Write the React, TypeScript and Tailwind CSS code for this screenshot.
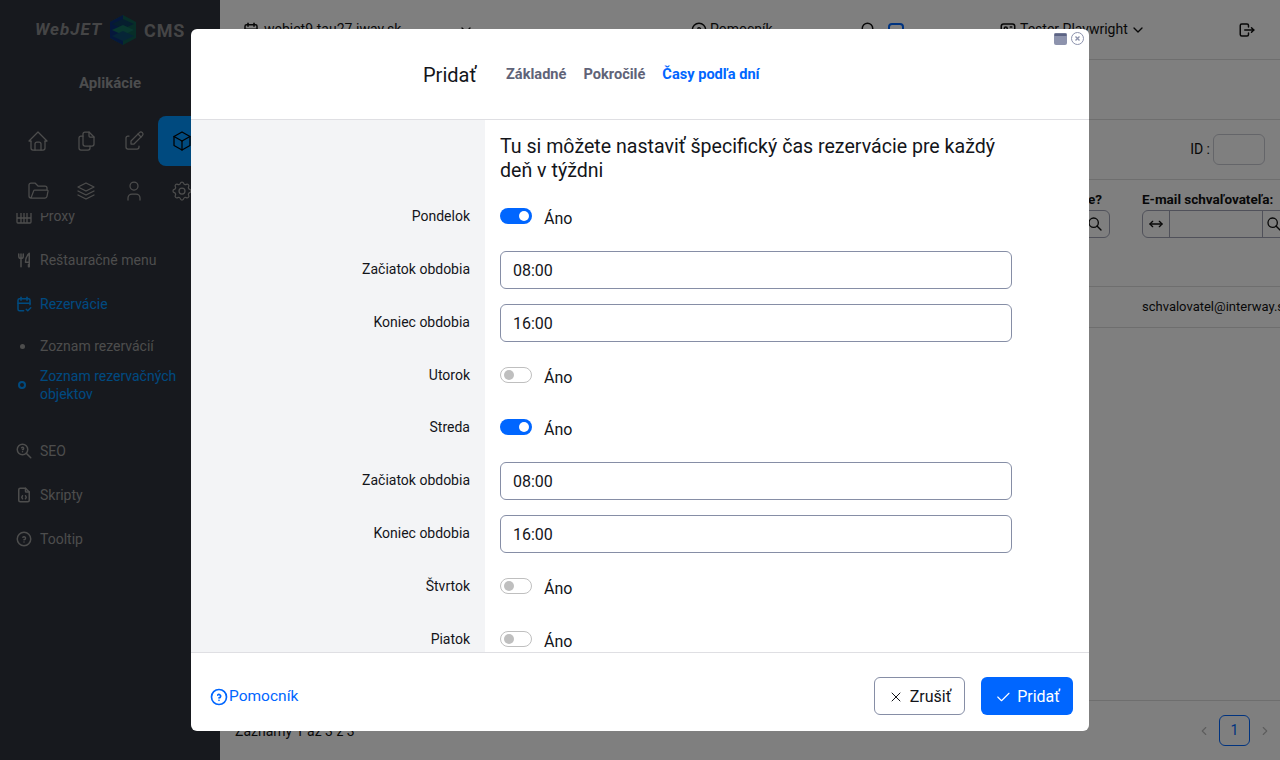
import React from 'react';
import {
  TbArrowsHorizontal, TbBox, TbCalendarCheck, TbCheck, TbChevronDown, TbChevronLeft, TbChevronRight,
  TbEdit, TbFileCode, TbFiles, TbFolderOpen, TbHelpCircle, TbHome, TbId, TbLogout, TbSearch,
  TbSettings, TbStack2, TbToolsKitchen2, TbUser, TbX, TbZoomQuestion, TbCalendar,
} from 'react-icons/tb';

const font = "font-['Roboto',sans-serif]";

const Logo = () => (
  <div className="h-[60px] flex items-center justify-center gap-[8px] text-[#8a8a8d]">
    <span className="italic font-bold text-[17px] tracking-[1px]">WebJET</span>
    <svg width="26" height="30" viewBox="0 0 26 30">
      <polygon points="13,0 26,7 26,23 13,30 0,23 0,7" fill="#0f5c50" />
      <polygon points="13,0 0,7 0,23 13,30" fill="#0b2f78" />
      <polygon points="2,9 13,4 24,9 13,14" fill="#0c3c5e" />
      <polygon points="2,15 13,10 24,15 13,20" fill="#12705f" />
      <polygon points="2,21 13,16 24,21 13,26" fill="#0c4a6e" />
    </svg>
    <span className="font-bold text-[18px] tracking-[0.8px]">CMS</span>
  </div>
);

const ProxyIcon = () => (
  <svg width="18" height="18" viewBox="0 0 18 18" fill="none" stroke="currentColor" strokeWidth="1.3">
    <rect x="2" y="2" width="14" height="14" rx="1" />
    <path d="M6 2v14M9 2v14M12 2v14M2 11h14" />
  </svg>
);

const appIcons = [TbHome, TbFiles, TbEdit, TbBox, TbFolderOpen, TbStack2, TbUser, TbSettings];

const Sidebar = () => (
  <aside className="w-[220px] shrink-0 h-full bg-[#2e323c] flex flex-col text-[#9a9a9a] overflow-hidden">
    <Logo />
    <div className="h-[56px] pt-[13px] text-center font-bold text-[15px] leading-5 text-[#999a9c]">Aplikácie</div>
    <div className="pl-[14px] grid grid-cols-[repeat(4,48px)] auto-rows-[50px] w-[220px]">
      {appIcons.map((Icon, i) => (
        <div
          key={i}
          className={`flex items-center justify-center ${i === 3 ? 'bg-[#0095ff] rounded-lg text-black w-[48px]' : ''}`}
        >
          <Icon size={24} strokeWidth={1.25} />
        </div>
      ))}
    </div>
    <div className="flex-1 -mt-[3px] overflow-hidden text-[14px]">
      <div className="-mt-[19px]">
        <div className="h-[44px] flex items-center pl-[15px] gap-[7px]"><ProxyIcon /><span>Proxy</span></div>
        <div className="h-[44px] flex items-center pl-[15px] gap-[7px]"><TbToolsKitchen2 size={18} /><span>Reštauračné menu</span></div>
        <div className="h-[44px] flex items-center pl-[15px] gap-[7px] text-[#0095ff]"><TbCalendarCheck size={18} /><span>Rezervácie</span></div>
        <div className="h-[40px] flex items-center pl-[20px] gap-[15px]">
          <span className="w-[5px] h-[5px] rounded-full bg-[#9a9a9a]" /><span>Zoznam rezervácií</span>
        </div>
        <div className="h-[48px] -mt-[5px] flex items-center pl-[18px] gap-[14px] text-[#0095ff] leading-[18px]">
          <span className="w-[8px] h-[8px] rounded-full border-2 border-[#0095ff] shrink-0" />
          <span>Zoznam rezervačných<br />objektov</span>
        </div>
        <div className="h-[44px] mt-[20px] flex items-center pl-[15px] gap-[7px]"><TbZoomQuestion size={18} /><span>SEO</span></div>
        <div className="h-[44px] flex items-center pl-[15px] gap-[7px]"><TbFileCode size={18} /><span>Skripty</span></div>
        <div className="h-[44px] flex items-center pl-[15px] gap-[7px]"><TbHelpCircle size={18} /><span>Tooltip</span></div>
      </div>
    </div>
  </aside>
);

const Main = () => (
  <main className="flex-1 min-w-0 h-full bg-white flex flex-col text-[#111] text-[14px] overflow-hidden">
    <header className="h-[60px] shrink-0 border-b border-[#ddd] flex items-center pl-[22px]">
      <TbCalendar size={18} />
      <span className="ml-[4px] w-[194px] whitespace-nowrap">webjet9.tau27.iway.sk</span>
      <TbChevronDown size={16} />
      <TbHelpCircle size={18} className="ml-[216px]" />
      <span className="ml-[2px] w-[150px]">Pomocník</span>
      <TbSearch size={18} />
      <span className="ml-[10px] w-[16px] h-[14px] border-2 border-[#0066ff] rounded-sm" />
      <TbId size={18} className="ml-[95px]" />
      <span className="ml-[3px] w-[110px] whitespace-nowrap">Tester Playwright</span>
      <TbChevronDown size={16} />
      <TbLogout size={18} className="ml-[92px]" />
    </header>
    <div className="h-[60px] shrink-0 border-b border-[#ddd]" />
    <div className="h-[60px] shrink-0 border-b border-[#ddd] flex items-center justify-end pr-[15px]">
      <span className="mr-[3px]">ID :</span>
      <span className="w-[52px] h-[31px] border border-[#c9cad2] rounded-md" />
    </div>
    <div className="h-[107px] shrink-0 border-b border-[#ddd] flex pt-[9px]">
      <div className="w-[890px] shrink-0 text-right font-bold">
        <div className="pr-[8px] leading-5 text-[13.5px]">Vyžaduje schválenie?</div>
        <div className="flex justify-end mt-[1px]">
          <span className="w-[30px] h-[28px] border border-[#a0a3b5] rounded-r-md flex items-center justify-center"><TbSearch size={16} /></span>
        </div>
      </div>
      <div className="ml-[32px] shrink-0 w-[140px]">
        <div className="font-bold leading-5 whitespace-nowrap text-[13.5px]">E-mail schvaľovateľa:</div>
        <div className="flex mt-[1px] h-[28px] w-[170px] border border-[#a0a3b5] rounded-md">
          <span className="w-[27px] border-r border-[#a0a3b5] flex items-center justify-center"><TbArrowsHorizontal size={16} /></span>
          <span className="w-[93px] border-r border-[#a0a3b5]" />
          <span className="pl-[3px] flex items-center"><TbSearch size={16} /></span>
        </div>
      </div>
    </div>
    <div className="h-[41px] shrink-0 border-b border-[#ddd] flex items-center pl-[922px] whitespace-nowrap text-[13px]">schvalovatel@interway.sk</div>
    <div className="flex-1" />
    <div className="h-[60px] shrink-0 border-t border-[#ddd] flex items-start justify-between pl-[15px] pr-[8px]">
      <span className="mt-[20px]">Záznamy 1 až 3 z 3</span>
      <div className="flex items-center gap-[8px] mt-[14px] text-[#bbb]">
        <TbChevronLeft size={14} />
        <span className="w-[31px] h-[31px] border border-[#0066ff] rounded-md flex items-center justify-center text-[#0066ff]">1</span>
        <TbChevronRight size={14} />
      </div>
    </div>
  </main>
);

const Field = ({ label, value }: { label: string; value: string }) => (
  <div className="flex h-[52.8px]">
    <label className="w-[294px] shrink-0 bg-[#f3f4f6] pr-[15px] pt-[8px] text-right text-[14px] leading-5 text-[#13151a]">{label}</label>
    <div className="pl-[15px]">
      <div className="w-[512px] h-[38px] border border-[#868ea6] rounded-md px-[12px] pt-[2px] flex items-center text-[16px] text-[#13151a]">{value}</div>
    </div>
  </div>
);

const Toggle = ({ label, on }: { label: string; on?: boolean }) => (
  <div className="flex h-[52.8px]">
    <label className="w-[294px] shrink-0 bg-[#f3f4f6] pr-[15px] pt-[8px] text-right text-[14px] leading-5 text-[#13151a]">{label}</label>
    <div className="pl-[15px] pt-[9px] flex items-start gap-[12px]">
      <span
        className={`mt-[1px] w-[32px] h-[16px] rounded-full flex items-center px-[3px] ${on ? 'bg-[#0066ff] justify-end' : 'border border-[#bfbfbf] bg-white justify-start'}`}
      >
        <span className={`w-[10px] h-[10px] rounded-full ${on ? 'bg-white' : 'bg-[#bfbfbf]'}`} />
      </span>
      <span className="text-[16px] leading-6 text-[#13151a]">Áno</span>
    </div>
  </div>
);

const Modal = () => (
  <div className="absolute left-[191px] top-[29px] w-[898px] h-[702px] bg-white rounded-md flex flex-col overflow-hidden">
    <div className="absolute right-[5px] top-[3px] flex items-center gap-[4px]">
      <svg width="13" height="12" viewBox="0 0 13 12">
        <rect width="13" height="12" rx="2" fill="#8d93ad" />
        <rect x="0.5" y="0.5" width="12" height="2.5" fill="#5d6484" />
      </svg>
      <svg width="13" height="13" viewBox="0 0 13 13" fill="none" stroke="#8d93ad">
        <circle cx="6.5" cy="6.5" r="6" />
        <path d="M4.5 4.5l4 4M8.5 4.5l-4 4" strokeWidth="1.4" />
      </svg>
    </div>
    <div className="h-[91px] shrink-0 border-b border-[#dfdfe3] flex items-center pl-[232px] pt-[1px]">
      <h2 className="text-[20px] text-[#13151a] w-[83px]">Pridať</h2>
      <nav className="flex gap-[17px] text-[14.6px] font-bold text-[#5f6378]">
        <span>Základné</span>
        <span>Pokročilé</span>
        <span className="text-[#0066ff]">Časy podľa dní</span>
      </nav>
    </div>
    <div className="h-[532px] shrink-0 overflow-hidden">
      <div className="flex h-[78.2px]">
        <div className="w-[294px] shrink-0 bg-[#f3f4f6]" />
        <div className="pl-[15px] pt-[15px] w-[527px] text-[19.6px] leading-6 text-[#13151a]">
          Tu si môžete nastaviť špecifický čas rezervácie pre každý deň v týždni
        </div>
      </div>
      <Toggle label="Pondelok" on />
      <Field label="Začiatok obdobia" value="08:00" />
      <Field label="Koniec obdobia" value="16:00" />
      <Toggle label="Utorok" />
      <Toggle label="Streda" on />
      <Field label="Začiatok obdobia" value="08:00" />
      <Field label="Koniec obdobia" value="16:00" />
      <Toggle label="Štvrtok" />
      <Toggle label="Piatok" />
    </div>
    <div className="flex-1 border-t border-[#dfdfe3] flex items-center justify-between pl-[19px] pr-[16px] pt-[8px]">
      <a className="flex items-center text-[15.5px] text-[#0066ff] pt-[1px]"><TbHelpCircle size={20} className="-ml-[1px]" />Pomocník</a>
      <div className="flex gap-[16px]">
        <button className="w-[91px] h-[38px] pt-[1px] border border-[#868ea6] rounded-md flex items-center justify-center gap-[6px] text-[16px] text-[#13151a]">
          <TbX size={16} strokeWidth={1.5} />Zrušiť
        </button>
        <button className="w-[92px] h-[38px] pt-[1px] bg-[#0066ff] rounded-md flex items-center justify-center gap-[5px] text-[16px] text-white">
          <TbCheck size={18} strokeWidth={1.5} />Pridať
        </button>
      </div>
    </div>
  </div>
);

export default function App() {
  return (
    <div className={`relative w-[1280px] h-[760px] overflow-hidden flex ${font}`}>
      <Sidebar />
      <Main />
      <div className="absolute inset-0 bg-black/50" />
      <Modal />
    </div>
  );
}
